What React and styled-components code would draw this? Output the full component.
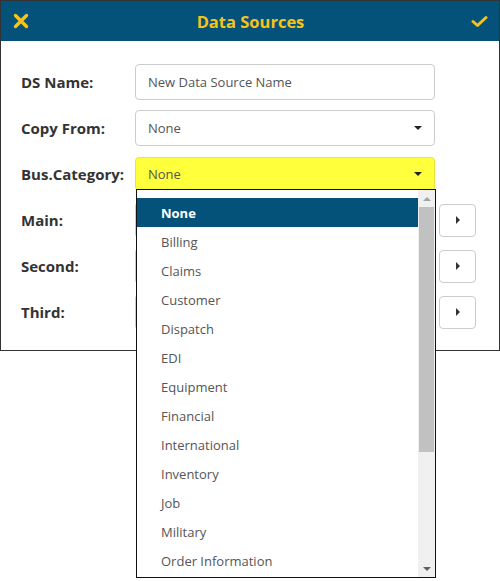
import React from 'react';
import styled, { createGlobalStyle } from 'styled-components';

const GlobalStyle = createGlobalStyle`
  html, body {
    margin: 0;
    min-height: 581px;
    background: #fff;
    font-family: "Open Sans", "Noto Sans", sans-serif;
  }
  #root {
    min-height: 581px;
  }
`;

const Dialog = styled.section`
  width: 500px;
  box-sizing: border-box;
  border: 1px solid #333;
  background: #fff;
`;

const Header = styled.header`
  height: 40px;
  background: #045279;
  display: flex;
  align-items: center;
  justify-content: space-between;
  padding: 0 10px 0 11px;
  color: #f7c31a;
`;

const Title = styled.h1`
  margin: 0;
  font-size: 16.5px;
  font-weight: 700;
  color: #f7c31a;
`;

const IconButton = styled.button`
  border: none;
  background: none;
  padding: 0;
  width: 18px;
  height: 18px;
  display: flex;
  align-items: center;
  justify-content: center;
  cursor: pointer;
`;

const Body = styled.div`
  padding: 23px 20px 20px 20px;
  display: flex;
  flex-direction: column;
  gap: 10px;
`;

const Row = styled.div`
  display: flex;
  align-items: center;
  height: 36px;
`;

const Label = styled.label`
  width: 114px;
  font-size: 15px;
  font-weight: 700;
  color: #333;
`;

const Field = styled.div`
  position: relative;
  width: 300px;
  height: ${p => (p.$short ? '34px' : '36px')};
  box-sizing: border-box;
  border: 1px solid ${p => (p.$highlight ? '#e6e63a' : '#ccc')};
  border-radius: 4px;
  background: ${p => (p.$highlight ? '#ffff3c' : '#fff')};
  display: flex;
  align-items: center;
  padding: 0 12px;
  font-size: 13px;
  color: #555;
`;

const Caret = styled.span`
  margin-left: auto;
  width: 0;
  height: 0;
  border-left: 4px solid transparent;
  border-right: 4px solid transparent;
  border-top: 4px solid #222;
`;

const SideButton = styled.button`
  margin-left: 4px;
  width: 37px;
  height: 33px;
  box-sizing: border-box;
  border: 1px solid #ccc;
  border-radius: 4px;
  background: #fff;
  display: flex;
  align-items: center;
  justify-content: center;
  padding: 0;
`;

const RightTri = styled.span`
  width: 0;
  height: 0;
  border-top: 4px solid transparent;
  border-bottom: 4px solid transparent;
  border-left: 4px solid #333;
`;

const DropList = styled.div`
  position: absolute;
  top: 31px;
  left: 0;
  width: 300px;
  height: 389px;
  box-sizing: border-box;
  border: 1px solid #111;
  background: #fff;
  display: flex;
  z-index: 10;
`;

const Options = styled.ul`
  flex: 1;
  margin: 0;
  padding: 8px 0 0 0;
  list-style: none;
  overflow: hidden;
`;

const Option = styled.li`
  height: 29px;
  display: flex;
  align-items: center;
  padding-left: 24px;
  font-size: 13px;
  color: ${p => (p.$selected ? '#fff' : '#555')};
  font-weight: ${p => (p.$selected ? 700 : 400)};
  background: ${p => (p.$selected ? '#045279' : 'transparent')};
`;

const ScrollBar = styled.div`
  width: 17px;
  background: #f0f0f0;
  display: flex;
  flex-direction: column;
  align-items: center;
`;

const ScrollArrow = styled.div`
  height: 17px;
  width: 17px;
  display: flex;
  align-items: center;
  justify-content: center;
  &::after {
    content: '';
    border-left: 4px solid transparent;
    border-right: 4px solid transparent;
    ${p => (p.$up ? 'border-bottom: 4px solid #a3a3a3;' : 'border-top: 4px solid #606060;')}
  }
`;

const Thumb = styled.div`
  width: 15px;
  height: 245px;
  background: #c1c1c1;
`;

const Spacer = styled.div`
  flex: 1;
`;

const categories = [
  'None', 'Billing', 'Claims', 'Customer', 'Dispatch', 'EDI', 'Equipment',
  'Financial', 'International', 'Inventory', 'Job', 'Military', 'Order Information',
];

const App = () => {
  return (
    <>
      <GlobalStyle />
      <Dialog>
        <Header>
          <IconButton aria-label="close">
            <svg width="16" height="16" viewBox="0 0 16 16">
              <path d="M2.5 2.5 L13.5 13.5 M13.5 2.5 L2.5 13.5" stroke="#f7c31a" strokeWidth="3.4" strokeLinecap="round" />
            </svg>
          </IconButton>
          <Title>Data Sources</Title>
          <IconButton aria-label="save">
            <svg width="17" height="13" viewBox="0 0 17 13">
              <path d="M2 6.5 L6.5 10.5 L15 2.5" stroke="#f7c31a" strokeWidth="3" fill="none" strokeLinecap="round" strokeLinejoin="round" />
            </svg>
          </IconButton>
        </Header>
        <Body>
          <Row>
            <Label>DS Name:</Label>
            <Field>New Data Source Name</Field>
          </Row>
          <Row>
            <Label>Copy From:</Label>
            <Field>None<Caret /></Field>
          </Row>
          <Row>
            <Label>Bus.Category:</Label>
            <Field $highlight $short>
              None<Caret />
              <DropList>
                <Options>
                  {categories.map((c, i) => (
                    <Option key={c} $selected={i === 0}>{c}</Option>
                  ))}
                </Options>
                <ScrollBar>
                  <ScrollArrow $up />
                  <Thumb />
                  <Spacer />
                  <ScrollArrow />
                </ScrollBar>
              </DropList>
            </Field>
          </Row>
          {['Main:', 'Second:', 'Third:'].map(l => (
            <Row key={l}>
              <Label>{l}</Label>
              <Field><Caret /></Field>
              <SideButton><RightTri /></SideButton>
            </Row>
          ))}
        </Body>
      </Dialog>
    </>
  );
};

export default App;
